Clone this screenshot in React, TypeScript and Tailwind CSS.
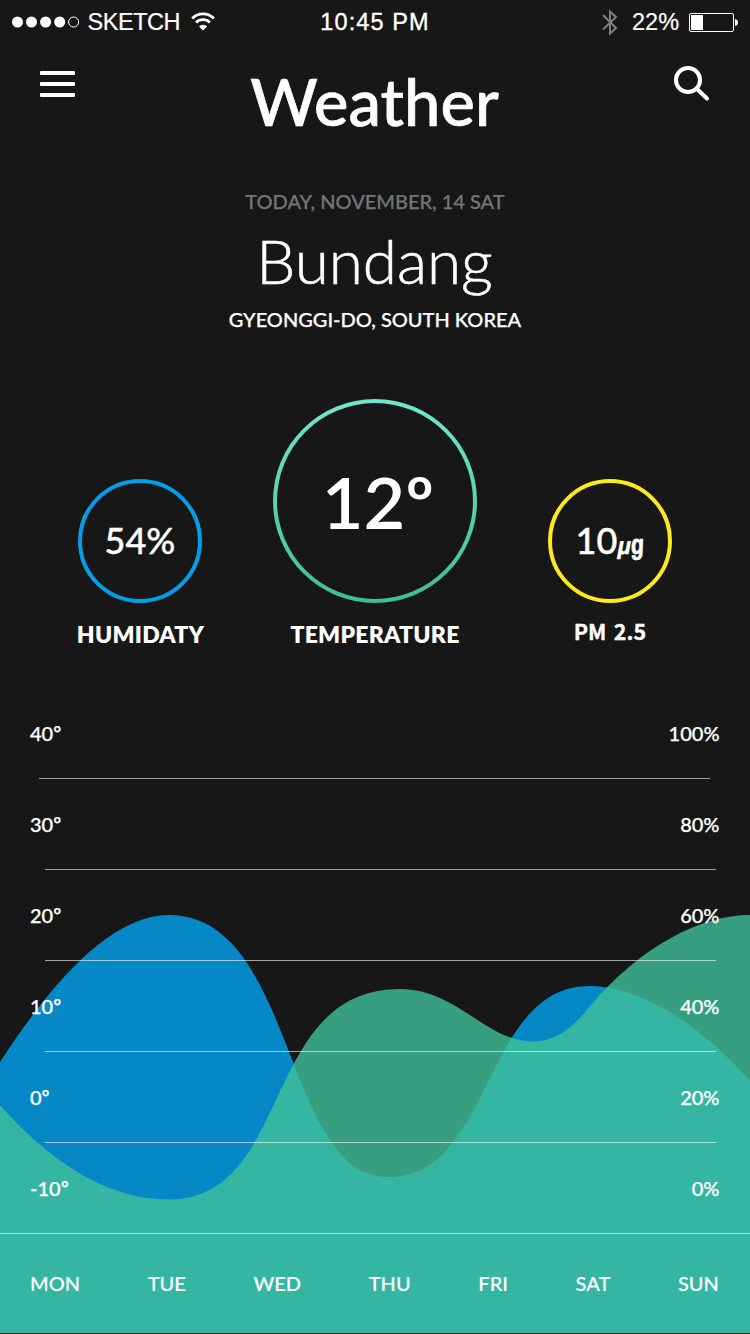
import React from "react";

const temperatures = ["40º", "30º", "20º", "10º", "0º", "-10º"];
const percentages = ["100%", "80%", "60%", "40%", "20%", "0%"];
const days = ["MON", "TUE", "WED", "THU", "FRI", "SAT", "SUN"];

function StatusBar() {
  return (
    <div className="grid h-11 grid-cols-[1fr_130px_1fr] items-center px-3 font-['Liberation_Sans',sans-serif] text-[23.5px] leading-none">
      <div className="flex items-center">
        <svg width="68" height="12" viewBox="0 0 68 12" fill="#fff">
          <circle cx="5.5" cy="6" r="5.5" />
          <circle cx="19.5" cy="6" r="5.5" />
          <circle cx="33.6" cy="6" r="5.5" />
          <circle cx="47.7" cy="6" r="5.5" />
          <circle cx="61.6" cy="6" r="5" fill="none" stroke="#fff" />
        </svg>
        <span className="ml-[7.5px] mt-0.5 w-[92.5px] whitespace-nowrap tracking-[-0.45px] [-webkit-text-stroke:0.2px_white]">SKETCH</span>
        <svg className="ml-[11px] -mt-0.5" width="24" height="19" viewBox="0 0 24 19" fill="none" stroke="#fff">
          <path d="M1.2 6.4a15.3 15.3 0 0 1 21.6 0" strokeWidth="2.8" />
          <path d="M5.1 10.5a9.8 9.8 0 0 1 13.8 0" strokeWidth="2.7" />
          <path d="M12 18.5 8 14.5a5.7 5.7 0 0 1 8 0z" fill="#fff" stroke="none" />
        </svg>
      </div>
      <span className="mt-0.5 whitespace-nowrap text-center tracking-[1.1px] [-webkit-text-stroke:0.35px_white]">10:45 PM</span>
      <div className="flex items-center justify-end">
        <svg width="16" height="27" viewBox="0 0 16 27" fill="none" stroke="#808080" strokeWidth="2">
          <path d="M1 6 14 19 8 24.5V2.5L14 8 1 20.5" />
        </svg>
        <span className="ml-[14px] mt-0.5 w-[48px] whitespace-nowrap [-webkit-text-stroke:0.2px_white]">22%</span>
        <svg className="ml-[9px]" width="49" height="19" viewBox="0 0 49 19">
          <rect x=".5" y=".5" width="44" height="18" rx="1.5" fill="none" stroke="#fff" />
          <rect x="2" y="2" width="12" height="15" fill="#fff" />
          <path d="M46 6q3 .5 3 3.5T46 13z" fill="#fff" />
        </svg>
      </div>
    </div>
  );
}

function Header() {
  return (
    <header className="flex h-[106px] items-start justify-between px-10">
      <button aria-label="Menu" className="mt-[27px] flex w-[35px] flex-col gap-[7px]">
        <span className="h-1 rounded-[1px] bg-white" />
        <span className="h-1 rounded-[1px] bg-white" />
        <span className="h-1 rounded-[1px] bg-white" />
      </button>
      <h1 className="mt-[19px] text-[65px] font-medium leading-[77px] [-webkit-text-stroke:0.7px_white]">Weather</h1>
      <button aria-label="Search" className="mt-[21px]">
        <svg width="36" height="37" viewBox="0 0 36 37" fill="none" stroke="#fff">
          <circle cx="14" cy="15" r="12" strokeWidth="4" />
          <path d="m23 24 10 9.5" strokeWidth="4" strokeLinecap="round" />
        </svg>
      </button>
    </header>
  );
}

function Place() {
  return (
    <section className="flex h-[249px] flex-col items-center pt-[39px]">
      <p className="text-[20px] font-medium leading-6 text-[#757575] [-webkit-text-stroke:0.25px_#757575]">TODAY, NOVEMBER, 14 SAT</p>
      <h2 className="mt-[9px] pr-px text-[62px] font-light leading-[76px] [-webkit-text-stroke:0.6px_white]">Bundang</h2>
      <p className="mt-[9px] text-[20px] font-medium leading-6 [-webkit-text-stroke:0.25px_white]">GYEONGGI-DO, SOUTH KOREA</p>
    </section>
  );
}

function Stats() {
  return (
    <section className="flex h-[313px] items-start pl-[76px]">
      <div className="mt-[80px] flex w-[128px] flex-col items-center">
        <div className="flex size-[124px] items-center justify-center rounded-full border-4 border-[#009fe8] pb-0.5">
          <span className="text-[36px] font-medium leading-none [-webkit-text-stroke:0.4px_white]">54%</span>
        </div>
        <span className="mt-[17px] pl-px text-[23px] font-extrabold leading-7 tracking-[0.25px]">HUMIDATY</span>
      </div>
      <div className="ml-[69px] flex w-[204px] flex-col items-center">
        <div className="size-[204px] rounded-full bg-linear-to-b from-[#73e6cc] to-[#3ebe92] p-1">
          <div className="flex size-full items-center justify-center rounded-full bg-[#171717] pl-1.5">
            <span className="text-[72px] font-semibold leading-none">12º</span>
          </div>
        </div>
        <span className="mt-[17px] text-[23px] font-extrabold leading-7 tracking-[0.25px]">TEMPERATURE</span>
      </div>
      <div className="ml-[71px] mt-[80px] flex w-[124px] flex-col items-center">
        <div className="flex size-[124px] items-center justify-center rounded-full border-4 border-[#fdea1a] pb-0.5">
          <div className="flex items-baseline whitespace-nowrap font-['Liberation_Sans',sans-serif] font-bold leading-none">
            <span className="w-[42px] font-['Lato',sans-serif] text-[36px] font-medium leading-none [-webkit-text-stroke:0.4px_white]">10</span>
            <span className="w-[13px] origin-left -skew-x-12 scale-x-90 text-[24px] leading-none [-webkit-text-stroke:0.6px_white]">μ</span>
            <span className="w-[14px] origin-left -skew-x-3 scale-x-75 text-[28px] leading-none [-webkit-text-stroke:0.8px_white]">g</span>
          </div>
        </div>
        <span className="mt-[14px] font-['Noto_Sans_CJK_KR',sans-serif] text-[21.5px] font-bold leading-7 [-webkit-text-stroke:0.3px_white] [word-spacing:2.5px]">PM 2.5</span>
      </div>
    </section>
  );
}

function Chart() {
  return (
    <section className="relative h-[622px]">
      <svg className="absolute inset-0" width="750" height="622" viewBox="0 712 750 622">
        <path
          d="M0 1062C50 985 110 915 169 915C296 915 283 1177 388 1177C494 1177 482 986 590 986C638 986 698 1022 750 1081V1333H0Z"
          fill="#0588c5"
        />
        <path
          d="M0 1105C50 1162 108 1199.5 168 1199.5C294 1199.5 260 989 400 989C457 989 486 1041.5 533 1041.5C558 1041.5 576 1024 590 1006C640 947 700 915 750 915V1333H0Z"
          fill="#40c29a"
          fillOpacity=".8"
        />
        <g fill="#fff" fillOpacity=".6">
          <rect x="39" y="778" width="671" height="1" />
          <rect x="45" y="869" width="671" height="1" />
          <rect x="45" y="960" width="671" height="1" />
          <rect x="45" y="1051" width="671" height="1" />
          <rect x="45" y="1142" width="671" height="1" />
          <rect x="0" y="1233" width="750" height="1" />
        </g>
      </svg>
      <div className="relative flex flex-col pl-[30px] pr-[30.5px] pt-[9px] text-[20px] font-medium leading-6 [-webkit-text-stroke:0.25px_white]">
        {temperatures.map((temperature, i) => (
          <div key={temperature} className="flex h-[91px] justify-between">
            <span>{temperature}</span>
            <span>{percentages[i]}</span>
          </div>
        ))}
      </div>
      <div className="relative mt-[4px] flex justify-between pl-[30px] pr-[31px] text-[20px] font-medium leading-6 [-webkit-text-stroke:0.15px_white]">
        {days.map((day) => (
          <span key={day}>{day}</span>
        ))}
      </div>
    </section>
  );
}

export default function App() {
  return (
    <main className="h-[1334px] w-[750px] overflow-hidden bg-[#171717] font-['Lato',sans-serif] text-white">
      <StatusBar />
      <Header />
      <Place />
      <Stats />
      <Chart />
    </main>
  );
}
